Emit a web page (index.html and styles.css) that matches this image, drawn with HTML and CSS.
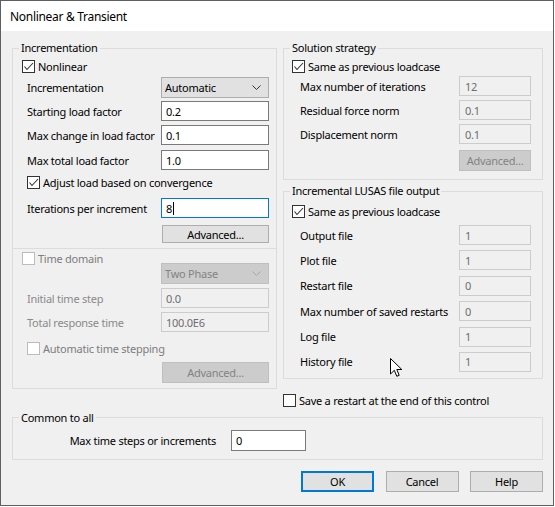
FILE: index.html
```html
<!DOCTYPE html>
<html lang="en">
<head>
  <meta charset="UTF-8">
  <meta name="viewport" content="width=device-width, initial-scale=1.0">
  <title>Nonlinear &amp; Transient</title>
  <link rel="stylesheet" href="styles.css">
</head>
<body>
  <div class="window">
    <div class="titlebar">Nonlinear &amp; Transient</div>

    <div class="dialog">
      <div class="columns">

        <fieldset class="group incr">
          <legend>Incrementation</legend>
          <div class="check out r-nonlinear">
            <span class="box"><svg viewBox="0 0 11 11"><path d="M1.5 5.5 L4 8.5 L10 2"/></svg></span>Nonlinear
          </div>
          <div class="row r-combo">
            <span>Incrementation</span>
            <div class="combo">Automatic<svg class="chev" viewBox="0 0 9 5"><path d="M0.5 0.5 L4.5 4.5 L8.5 0.5"/></svg></div>
          </div>
          <div class="row r-start"><span>Starting load factor</span><div class="edit">0.2</div></div>
          <div class="row r-change"><span>Max change in load factor</span><div class="edit">0.1</div></div>
          <div class="row r-total"><span>Max total load factor</span><div class="edit">1.0</div></div>
          <div class="check r-adjust">
            <span class="box"><svg viewBox="0 0 11 11"><path d="M1.5 5.5 L4 8.5 L10 2"/></svg></span>Adjust load based on convergence
          </div>
          <div class="row r-iter"><span>Iterations per increment</span><div class="edit focus">8<span class="caret"></span></div></div>
          <div class="row r-adv"><span></span><button class="btn">Advanced...</button></div>

          <div class="sep"></div>

          <div class="check out off r-time"><span class="box"></span>Time domain</div>
          <div class="row r-phase">
            <span></span>
            <div class="combo off">Two Phase<svg class="chev" viewBox="0 0 9 5"><path d="M0.5 0.5 L4.5 4.5 L8.5 0.5"/></svg></div>
          </div>
          <div class="row off r-step"><span>Initial time step</span><div class="edit off">0.0</div></div>
          <div class="row off r-resp"><span>Total response time</span><div class="edit off">100.0E6</div></div>
          <div class="check off r-auto"><span class="box"></span>Automatic time stepping</div>
          <div class="row r-adv2"><span></span><button class="btn off">Advanced...</button></div>
        </fieldset>

        <div class="right">
          <fieldset class="group strategy">
            <legend>Solution strategy</legend>
            <div class="check out r-same">
              <span class="box"><svg viewBox="0 0 11 11"><path d="M1.5 5.5 L4 8.5 L10 2"/></svg></span>Same as previous loadcase
            </div>
            <div class="row r-first"><span>Max number of iterations</span><div class="edit off">12</div></div>
            <div class="row"><span>Residual force norm</span><div class="edit off">0.1</div></div>
            <div class="row"><span>Displacement norm</span><div class="edit off">0.1</div></div>
            <div class="row r-adv3"><span></span><button class="btn off">Advanced...</button></div>
          </fieldset>

          <fieldset class="group output">
            <legend>Incremental LUSAS file output</legend>
            <div class="check out r-same2">
              <span class="box"><svg viewBox="0 0 11 11"><path d="M1.5 5.5 L4 8.5 L10 2"/></svg></span>Same as previous loadcase
            </div>
            <div class="files">
              <div class="row"><span>Output file</span><div class="edit off">1</div></div>
              <div class="row"><span>Plot file</span><div class="edit off">1</div></div>
              <div class="row"><span>Restart file</span><div class="edit off">0</div></div>
              <div class="row"><span>Max number of saved restarts</span><div class="edit off">0</div></div>
              <div class="row"><span>Log file</span><div class="edit off">1</div></div>
              <div class="row"><span>History file</span><div class="edit off">1</div></div>
            </div>
          </fieldset>

          <div class="check r-save"><span class="box"></span>Save a restart at the end of this control</div>
        </div>
      </div>

      <fieldset class="group common">
        <legend>Common to all</legend>
        <div class="common-row">
          <span class="common-label">Max time steps or increments</span>
          <div class="edit">0</div>
        </div>
      </fieldset>

      <div class="buttons">
        <button class="btn default">OK</button>
        <button class="btn">Cancel</button>
        <button class="btn">Help</button>
      </div>
    </div>

    <!-- mouse pointer left over the dialog -->
    <svg class="pointer" viewBox="0 0 13 20" width="13" height="20">
      <path d="M0.5 0.5 L0.5 16 L4.3 12.3 L6.8 18.3 L9.2 17.3 L6.8 11.5 L11.8 11.5 Z" fill="#fff" stroke="#000" stroke-width="1"/>
    </svg>
  </div>
</body>
</html>
```

FILE: styles.css
```css
* {
  box-sizing: border-box;
}

body {
  margin: 0;
  font-family: "Noto Sans", "Open Sans", sans-serif;
  font-size: 11px;
  letter-spacing: -0.25px;
  color: #000;
  background: #fff;
}

.window {
  position: relative;
  width: 554px;
  height: 506px;
  border: 1px solid #5f5f5f;
  background: #f0f0f0;
}

.titlebar {
  height: 30px;
  padding-left: 9px;
  display: flex;
  align-items: center;
  background: #fff;
  font-size: 12px;
  letter-spacing: -0.3px;
}

.dialog {
  padding: 9px 10px 0 11px;
}

.columns {
  display: flex;
  align-items: flex-start;
  gap: 6px;
}

/* group boxes */
.group {
  margin: 0;
  padding: 0;
  min-width: 0;
  border: 1px solid #dcdcdc;
}

.group legend {
  margin-left: 6px;
  padding: 0 2px;
  height: 16px;
  line-height: 16px;
}

.incr {
  width: 265px;
  padding: 0 7px 5px 14px;
}

.incr legend {
  margin-left: -8px;
}

.right {
  width: 260px;
}

.strategy,
.output {
  padding: 0 11px 6px 16px;
}

.strategy {
  padding-bottom: 8px;
}

.strategy legend,
.output legend {
  margin-left: -10px;
}

.output {
  margin-top: 3px;
}

/* rows */
.row {
  display: flex;
  align-items: center;
  justify-content: space-between;
  height: 20px;
  margin-top: 4px;
  white-space: nowrap;
}

.row.off {
  color: #8a8a8a;
}

.check {
  display: flex;
  align-items: center;
  height: 15px;
  white-space: nowrap;
}

.check.off {
  color: #7d7d7d;
}

.box {
  width: 13px;
  height: 13px;
  margin-right: 3px;
  border: 1px solid #333;
  background: #fff;
  flex: none;
}

.check.off .box {
  border-color: #bcbcbc;
}

.box svg {
  display: block;
  width: 11px;
  height: 11px;
  fill: none;
  stroke: #333;
  stroke-width: 1.1;
}

.incr .check.out {
  margin-left: -5px;
}

.right .check.out {
  margin-left: -8px;
}

/* fields */
.edit {
  width: 108px;
  height: 20px;
  padding-left: 4px;
  display: flex;
  align-items: center;
  background: #fff;
  border: 1px solid #7a7a7a;
}

.edit.focus {
  border-color: #0078d7;
}

.caret {
  width: 1px;
  height: 13px;
  margin-left: 1px;
  background: #000;
}

.edit.off {
  background: #f0f0f0;
  border-color: #cccccc;
  color: #6d6d6d;
}

.right .edit {
  width: 72px;
  padding-left: 5px;
}

.combo {
  width: 108px;
  height: 21px;
  padding: 0 7px 0 3px;
  display: flex;
  align-items: center;
  justify-content: space-between;
  background: #e1e1e1;
  border: 1px solid #adadad;
}

.combo.off {
  background: #cccccc;
  border-color: #bfbfbf;
  color: #838383;
}

.chev {
  width: 9px;
  height: 5px;
  fill: none;
  stroke: #333;
  stroke-width: 1;
}

.combo.off .chev {
  stroke: #a6a6a6;
}

.btn {
  height: 21px;
  padding: 0;
  font-family: inherit;
  font-size: 11px;
  letter-spacing: inherit;
  color: #000;
  background: #e1e1e1;
  border: 1px solid #adadad;
}

.btn.off {
  background: #cccccc;
  border-color: #bfbfbf;
  color: #838383;
}

.incr .btn {
  width: 107px;
}

.right .btn {
  width: 72px;
}

.sep {
  margin: 5px -7px 0 -14px;
  border-top: 1px solid #dcdcdc;
}

/* vertical rhythm of the left group */
.r-nonlinear { margin-top: 3px; }
.r-combo { margin-top: 3px; height: 21px; }
.r-start { margin-top: 3px; }
.r-total { margin-top: 5px; }
.r-adjust { margin-top: 5px; }
.r-iter { margin-top: 8px; }
.r-adv { margin-top: 7px; height: 18px; }
.r-adv .btn { height: 18px; }
.r-time { margin-top: 2px; }
.r-phase { margin-top: -3px; height: 21px; }
.r-auto { margin-top: 9px; }
.r-adv2 { margin-top: 6px; height: 21px; }

/* right groups */
.r-same { margin-top: 3px; }
.r-first { margin-top: 2px; }
.r-adv3 { margin-top: 6px; height: 21px; }
.r-same2 { margin-top: 5px; }

.files {
  margin-top: 6px;
  display: flex;
  flex-direction: column;
  gap: 5.4px;
}

.files .row {
  margin-top: 0;
}

.r-save {
  margin-top: 14px;
}

/* common to all */
.common {
  margin-top: 2px;
  padding: 0 0 8px 0;
}

.common-row {
  display: flex;
  align-items: center;
  gap: 15px;
  margin-top: 4px;
}

.common-label {
  width: 203px;
  text-align: right;
}

.common .edit {
  width: 75px;
  height: 21px;
}

.buttons {
  display: flex;
  justify-content: flex-end;
  gap: 11.5px;
  margin-top: 11px;
}

.buttons .btn {
  width: 73px;
}

.btn.default {
  border: 2px solid #0078d7;
}

.pointer {
  position: absolute;
  left: 389px;
  top: 357px;
}
```
